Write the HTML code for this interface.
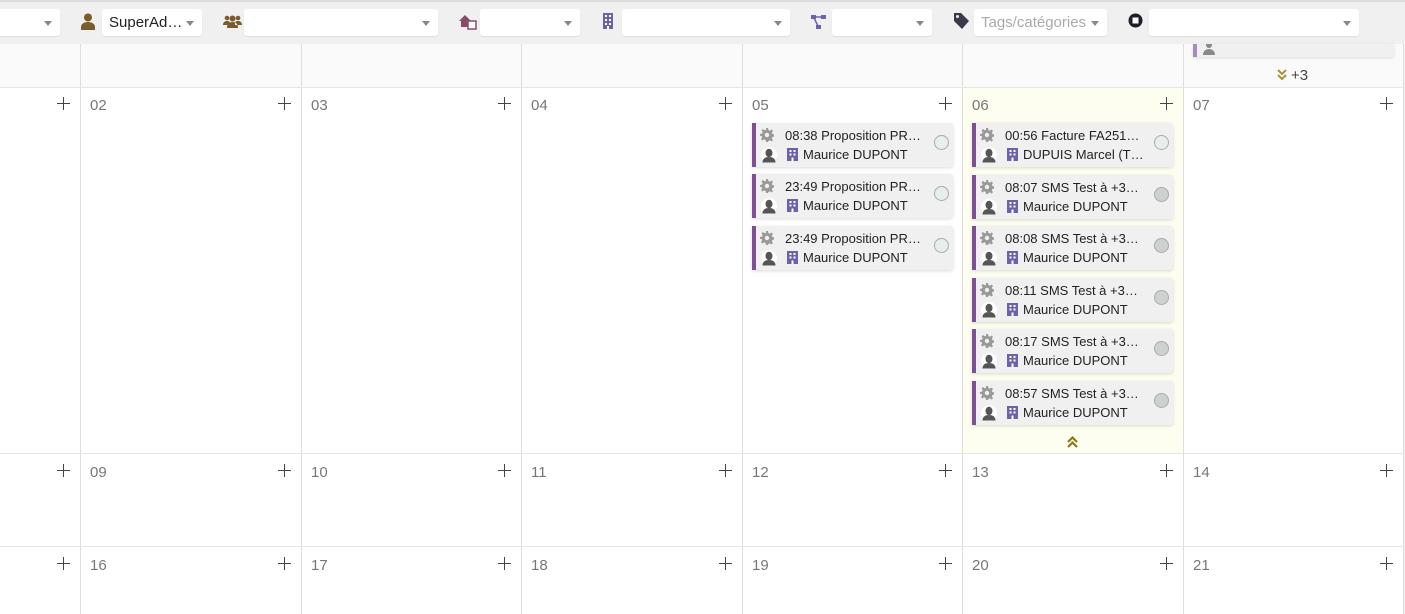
<!DOCTYPE html>
<html><head><meta charset="utf-8">
<style>
*{box-sizing:border-box;margin:0;padding:0}
body{width:1405px;height:614px;overflow:hidden;background:#fff;font-family:"Liberation Sans",sans-serif;position:relative}
.a{position:absolute}
.tb{left:0;top:0;width:1405px;height:44px;background:#f0f0f0;border-top:2px solid #ddd}
.sel{position:absolute;top:9px;height:27px;background:#fff;border-radius:3px;box-shadow:0 1px 1px rgba(0,0,0,.08);font-size:15px;color:#222;line-height:28px;padding-left:7px}
.sel:after{content:"";position:absolute;right:8px;top:12px;border-left:4.5px solid transparent;border-right:4.5px solid transparent;border-top:5px solid #888}
.vl{position:absolute;top:44px;width:1px;height:570px;background:#dedede}
.hl{position:absolute;left:0;width:1403px;height:1px;background:#e6e6e6}
.d{position:absolute;font-size:15px;color:#777;margin-top:1px}
.p{position:absolute;width:13px;height:13px;font-size:0}
.p:before{content:"";position:absolute;left:6px;top:0;width:1px;height:13px;background:#444}
.p:after{content:"";position:absolute;left:0;top:6px;width:13px;height:1px;background:#444}
.c{position:absolute;width:201px;height:44px;background:#f0f0f0;border-left:4px solid #7e4f96;border-radius:0 3px 3px 0;box-shadow:0 1px 3px rgba(0,0,0,.15);font-size:13px;color:#222}
.c .t1{position:absolute;left:29px;top:5px;white-space:nowrap}
.c .t2{position:absolute;left:47px;top:24px;white-space:nowrap}
.c .g{position:absolute;left:4px;top:5px}
.c .av{position:absolute;left:5px;top:24px}
.c .b{position:absolute;left:31px;top:25px}
.c .ci{position:absolute;left:178px;top:12px;width:15px;height:15px;border-radius:50%;border:1px solid #aaa;background:#e6eeee}
.c .ci.f{background:#ccd2d2}
</style></head><body>
<div class="a tb"></div>
<div class="sel" style="left:-5px;width:65px"></div>
<svg class="a" style="left:81px;top:13px" width="14" height="17" viewBox="0 0 14 17"><circle cx="7" cy="4.5" r="4" fill="#7a5b2e"/><path d="M0 17v-3c0-3 3-5 7-5s7 2 7 5v3z" fill="#7a5b2e"/></svg>
<div class="sel" style="left:102px;width:100px">SuperAd…</div>
<svg class="a" style="left:223px;top:15px" width="19" height="13" viewBox="0 0 19 13"><circle cx="4" cy="3" r="2.3" fill="#7a5b2e"/><circle cx="15" cy="3" r="2.3" fill="#7a5b2e"/><circle cx="9.5" cy="3.5" r="3" fill="#7a5b2e"/><path d="M0 10c0-3 2-4 4-4s3 1 3 2v2zM19 10c0-3-2-4-4-4s-3 1-3 2v2zM4 13c0-4 2-6 5.5-6s5.5 2 5.5 6z" fill="#7a5b2e"/></svg>
<div class="sel" style="left:244px;width:194px"></div>
<svg class="a" style="left:459px;top:13px" width="18" height="17" viewBox="0 0 18 17"><path d="M0 8l6-6 6 6h-2v6H2V8z" fill="#8c4a6a"/><rect x="9" y="8" width="8" height="8" fill="#fff" stroke="#8c4a6a" stroke-width="1.5"/></svg>
<div class="sel" style="left:480px;width:100px"></div>
<svg class="a" style="left:602px;top:13px" width="12" height="16" viewBox="0 0 12 16"><rect x="1" y="0" width="10" height="16" fill="#6b62a8"/><g fill="#fff"><rect x="3" y="2" width="2" height="2"/><rect x="7" y="2" width="2" height="2"/><rect x="3" y="6" width="2" height="2"/><rect x="7" y="6" width="2" height="2"/><rect x="3" y="10" width="2" height="2"/><rect x="7" y="10" width="2" height="2"/></g><rect x="5" y="13" width="2" height="3" fill="#fff"/></svg>
<div class="sel" style="left:622px;width:168px"></div>
<svg class="a" style="left:811px;top:15px" width="15" height="14" viewBox="0 0 15 14"><rect x="0" y="0" width="5" height="4" fill="#6b62a8"/><rect x="10" y="0" width="5" height="4" fill="#6b62a8"/><rect x="5" y="10" width="5" height="4" fill="#6b62a8"/><path d="M3 3l4 8M5 2h5" stroke="#6b62a8" stroke-width="1.5"/></svg>
<div class="sel" style="left:832px;width:100px"></div>
<svg class="a" style="left:954px;top:13px" width="15" height="16" viewBox="0 0 15 16"><path d="M0 0h7l8 8-7 8-8-8z" fill="#3a3a4a"/><circle cx="3.5" cy="3.5" r="1.5" fill="#f0f0f0"/></svg>
<div class="sel" style="left:974px;width:133px;color:#aaa">Tags/catégories</div>
<svg class="a" style="left:1128px;top:13px" width="15" height="15" viewBox="0 0 15 15"><circle cx="7.5" cy="7.5" r="7" fill="#1e1e2a"/><rect x="4.5" y="4.5" width="6" height="6" fill="#fff"/></svg>
<div class="sel" style="left:1149px;width:210px"></div>

<div class="a" style="left:0;top:44px;width:1403px;height:43px;background:#fafafa"></div>
<div class="a" style="left:963px;top:88px;width:220px;height:365px;background:#fdfdf0"></div>
<div class="a" style="left:1403px;top:44px;width:2px;height:570px;background:#f0f0f0"></div>
<div class="vl" style="left:80px"></div><div class="vl" style="left:301px"></div><div class="vl" style="left:521px"></div><div class="vl" style="left:742px"></div><div class="vl" style="left:962px"></div><div class="vl" style="left:1183px"></div><div class="vl" style="left:1403px"></div>
<div class="hl" style="top:87px"></div><div class="hl" style="top:453px"></div><div class="hl" style="top:546px"></div>

<div class="a" style="left:1193px;top:44px;width:201px;height:13px;background:#f0f0f0;border-left:4px solid #a88bb8;box-shadow:0 1px 3px rgba(0,0,0,.12)"></div>
<svg class="a" style="left:1202px;top:44px" width="14" height="11" viewBox="0 0 14 11"><circle cx="7" cy="1" r="3" fill="#888"/><path d="M1 11c0-4 3-6 6-6s6 2 6 6z" fill="#888"/></svg>
<svg class="a" style="left:1277px;top:69px" width="10" height="12" viewBox="0 0 10 12"><path d="M1 1l4 4 4-4M1 6l4 4 4-4" fill="none" stroke="#a8923a" stroke-width="2"/></svg>
<div class="a" style="left:1291px;top:67px;font-size:15px;color:#444">+3</div>

<div class="d" style="left:90px;top:96px">02</div><div class="d" style="left:311px;top:96px">03</div><div class="d" style="left:531px;top:96px">04</div><div class="d" style="left:752px;top:96px">05</div><div class="d" style="left:972px;top:96px">06</div><div class="d" style="left:1193px;top:96px">07</div>
<div class="d" style="left:90px;top:463px">09</div><div class="d" style="left:311px;top:463px">10</div><div class="d" style="left:531px;top:463px">11</div><div class="d" style="left:752px;top:463px">12</div><div class="d" style="left:972px;top:463px">13</div><div class="d" style="left:1193px;top:463px">14</div>
<div class="d" style="left:90px;top:556px">16</div><div class="d" style="left:311px;top:556px">17</div><div class="d" style="left:531px;top:556px">18</div><div class="d" style="left:752px;top:556px">19</div><div class="d" style="left:972px;top:556px">20</div><div class="d" style="left:1193px;top:556px">21</div>

<div class="p" style="left:57px;top:97px"></div><div class="p" style="left:278px;top:97px"></div><div class="p" style="left:498px;top:97px"></div><div class="p" style="left:719px;top:97px"></div><div class="p" style="left:939px;top:97px"></div><div class="p" style="left:1160px;top:97px"></div><div class="p" style="left:1380px;top:97px"></div>
<div class="p" style="left:57px;top:464px"></div><div class="p" style="left:278px;top:464px"></div><div class="p" style="left:498px;top:464px"></div><div class="p" style="left:719px;top:464px"></div><div class="p" style="left:939px;top:464px"></div><div class="p" style="left:1160px;top:464px"></div><div class="p" style="left:1380px;top:464px"></div>
<div class="p" style="left:57px;top:557px"></div><div class="p" style="left:278px;top:557px"></div><div class="p" style="left:498px;top:557px"></div><div class="p" style="left:719px;top:557px"></div><div class="p" style="left:939px;top:557px"></div><div class="p" style="left:1160px;top:557px"></div><div class="p" style="left:1380px;top:557px"></div>

<svg width="0" height="0" style="position:absolute"><defs>
<symbol id="gear" viewBox="0 0 14 14"><path d="M6 0h2l.4 2 1.5.7 1.7-1.2 1.4 1.4-1.2 1.7.7 1.5 2 .4v2l-2 .4-.7 1.5 1.2 1.7-1.4 1.4-1.7-1.2-1.5.7L8 14H6l-.4-2-1.5-.7-1.7 1.2-1.4-1.4 1.2-1.7-.7-1.5L0 8V6l2-.4.7-1.5-1.2-1.7 1.4-1.4 1.7 1.2L6.1 2z" fill="#999"/><circle cx="7" cy="7" r="2.2" fill="#f0f0f0"/></symbol>
<symbol id="av" viewBox="0 0 16 16"><circle cx="8" cy="8" r="8" fill="#fff"/><ellipse cx="8" cy="6" rx="3.5" ry="4.2" fill="#555"/><path d="M1.5 15.5c0-4 3-5.5 6.5-5.5s6.5 1.5 6.5 5.5z" fill="#555"/></symbol>
<symbol id="bd" viewBox="0 0 11 13"><rect x="0" y="0" width="11" height="13" fill="#6b62a8"/><g fill="#fff"><rect x="2.5" y="2" width="2" height="2"/><rect x="6.5" y="2" width="2" height="2"/><rect x="2.5" y="5.5" width="2" height="2"/><rect x="6.5" y="5.5" width="2" height="2"/><rect x="4.5" y="9.5" width="2" height="3.5"/></g></symbol>
</defs></svg>

<div class="c" style="left:752px;top:123px"><svg class="g" width="14" height="14"><use href="#gear"/></svg><span class="t1">08:38 Proposition PR…</span><svg class="av" width="16" height="16"><use href="#av"/></svg><svg class="b" width="11" height="13"><use href="#bd"/></svg><span class="t2">Maurice DUPONT</span><div class="ci"></div></div>
<div class="c" style="left:752px;top:174px"><svg class="g" width="14" height="14"><use href="#gear"/></svg><span class="t1">23:49 Proposition PR…</span><svg class="av" width="16" height="16"><use href="#av"/></svg><svg class="b" width="11" height="13"><use href="#bd"/></svg><span class="t2">Maurice DUPONT</span><div class="ci"></div></div>
<div class="c" style="left:752px;top:226px"><svg class="g" width="14" height="14"><use href="#gear"/></svg><span class="t1">23:49 Proposition PR…</span><svg class="av" width="16" height="16"><use href="#av"/></svg><svg class="b" width="11" height="13"><use href="#bd"/></svg><span class="t2">Maurice DUPONT</span><div class="ci"></div></div>
<div class="c" style="left:972px;top:123px"><svg class="g" width="14" height="14"><use href="#gear"/></svg><span class="t1">00:56 Facture FA251…</span><svg class="av" width="16" height="16"><use href="#av"/></svg><svg class="b" width="11" height="13"><use href="#bd"/></svg><span class="t2">DUPUIS Marcel (T…</span><div class="ci"></div></div>
<div class="c" style="left:972px;top:175px"><svg class="g" width="14" height="14"><use href="#gear"/></svg><span class="t1">08:07 SMS Test à +3…</span><svg class="av" width="16" height="16"><use href="#av"/></svg><svg class="b" width="11" height="13"><use href="#bd"/></svg><span class="t2">Maurice DUPONT</span><div class="ci f"></div></div>
<div class="c" style="left:972px;top:226px"><svg class="g" width="14" height="14"><use href="#gear"/></svg><span class="t1">08:08 SMS Test à +3…</span><svg class="av" width="16" height="16"><use href="#av"/></svg><svg class="b" width="11" height="13"><use href="#bd"/></svg><span class="t2">Maurice DUPONT</span><div class="ci f"></div></div>
<div class="c" style="left:972px;top:278px"><svg class="g" width="14" height="14"><use href="#gear"/></svg><span class="t1">08:11 SMS Test à +3…</span><svg class="av" width="16" height="16"><use href="#av"/></svg><svg class="b" width="11" height="13"><use href="#bd"/></svg><span class="t2">Maurice DUPONT</span><div class="ci f"></div></div>
<div class="c" style="left:972px;top:329px"><svg class="g" width="14" height="14"><use href="#gear"/></svg><span class="t1">08:17 SMS Test à +3…</span><svg class="av" width="16" height="16"><use href="#av"/></svg><svg class="b" width="11" height="13"><use href="#bd"/></svg><span class="t2">Maurice DUPONT</span><div class="ci f"></div></div>
<div class="c" style="left:972px;top:381px"><svg class="g" width="14" height="14"><use href="#gear"/></svg><span class="t1">08:57 SMS Test à +3…</span><svg class="av" width="16" height="16"><use href="#av"/></svg><svg class="b" width="11" height="13"><use href="#bd"/></svg><span class="t2">Maurice DUPONT</span><div class="ci f"></div></div>
<svg class="a" style="left:1067px;top:436px" width="11" height="12" viewBox="0 0 11 12"><path d="M1 6l4.5-4.5L10 6M1 11l4.5-4.5L10 11" fill="none" stroke="#8a7a1a" stroke-width="2.2"/></svg>
</body></html>
